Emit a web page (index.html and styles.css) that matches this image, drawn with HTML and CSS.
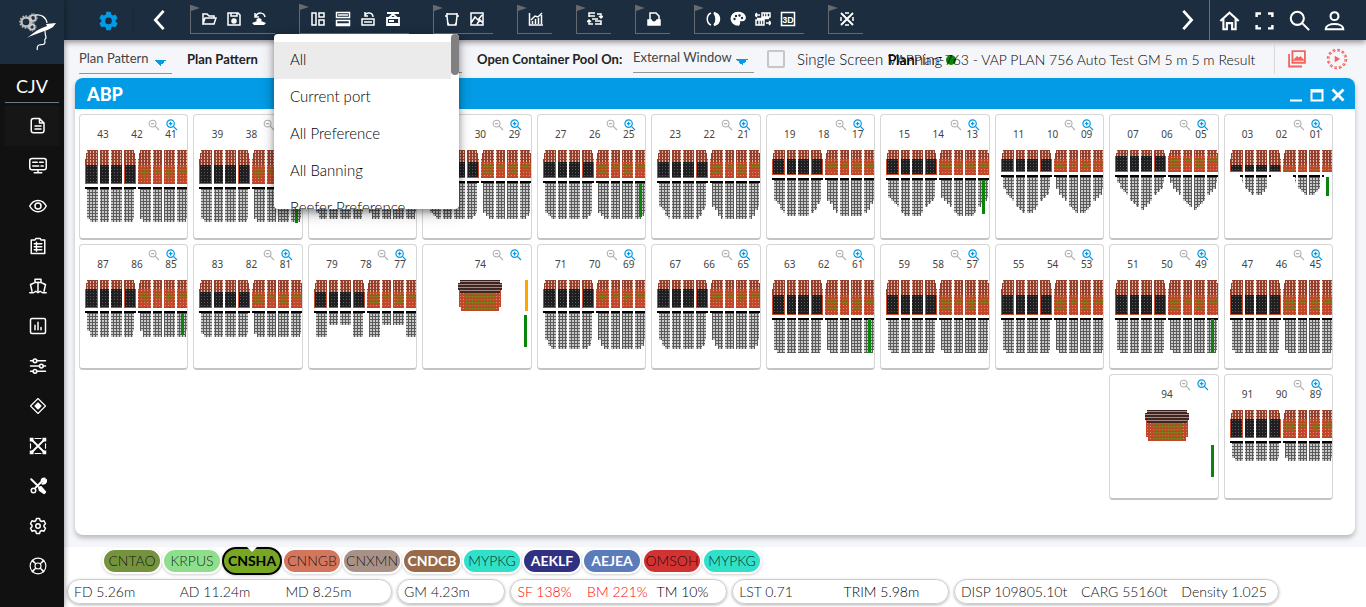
FILE: index.html
```html
<!DOCTYPE html>
<html lang="en">
<head>
<meta charset="utf-8">
<title>ABP – Stowage Planning</title>
<link rel="stylesheet" href="styles.css">
</head>
<body>
<svg class="defs" width="0" height="0" aria-hidden="true">
  <defs>
    <pattern id="p-brown" width="3" height="3" patternUnits="userSpaceOnUse"><rect width="3" height="3" fill="#93402d"/><rect x="1" y="1" width="1" height="2" fill="#e3b3a6"/></pattern>
    <pattern id="p-black" width="3" height="3" patternUnits="userSpaceOnUse"><rect width="3" height="3" fill="#1f1f21"/><rect x="1" y="1" width="1" height="1" fill="#5a5a5a"/></pattern>
    <pattern id="p-orange" width="3" height="3" patternUnits="userSpaceOnUse"><rect width="3" height="3" fill="#c2462a"/><rect x="1" y="1" width="1" height="1" fill="#d98a70"/></pattern>
    <pattern id="p-olive" width="3" height="3" patternUnits="userSpaceOnUse"><rect width="3" height="3" fill="#b34a20"/><rect y="1" width="3" height="1" fill="#857a1c"/><rect x="1" y="1" width="1" height="2" fill="#7d8020"/></pattern>
    <pattern id="p-hold" width="3" height="3" patternUnits="userSpaceOnUse"><rect width="3" height="3" fill="#5a5a5a"/><rect x="1" y="1" width="2" height="2" fill="#c8c8c8"/></pattern>
    <pattern id="p-house" width="3" height="3" patternUnits="userSpaceOnUse"><rect width="3" height="3" fill="#40241f"/><rect y="1" width="3" height="1" fill="#a18c88"/></pattern>
    <symbol id="i-minus" viewBox="0 0 12 12"><circle cx="4.6" cy="4.6" r="3.4"/><path d="M7.2 7.2 11 11M3 4.6h3.2"/></symbol>
    <symbol id="i-plus" viewBox="0 0 12 12"><circle cx="4.6" cy="4.6" r="3.7"/><path d="M7.4 7.4 11 11M2.8 4.6h3.6M4.6 2.8v3.6"/></symbol>
  </defs>
</svg>

<aside class="side">
  <div class="logo">
    <svg viewBox="0 0 64 64" aria-hidden="true">
      <circle cx="26" cy="22" r="4.5" stroke="#bbb" stroke-width="2.4"/><circle cx="26" cy="22" r="6" stroke="#bbb" stroke-width="1.6" stroke-dasharray="1.5 1.5"/>
      <circle cx="33" cy="18" r="2.8" stroke="#ccc" stroke-width="1.8"/><circle cx="33" cy="18" r="4.2" stroke="#ccc" stroke-dasharray="1.3 1.2"/>
      <circle cx="32" cy="27" r="2.6" stroke="#ccc" stroke-width="1.8"/><circle cx="32" cy="27" r="4" stroke="#ccc" stroke-dasharray="1.3 1.2"/>
      <path d="M35 15c6-1 11 2 12 8" stroke="#fff" stroke-width="1.2"/>
      <path d="M27 38c7-6 13-10 20-12l-1-2 10-1-3 4c-8 5-17 6-26 11z" fill="#fff"/>
      <path d="M45 31c0 4 1 5 1 7-1 1-2 1-1 4 0 4-4 2-6 3-3 1-1 3-2 5" stroke="#fff" stroke-width="1.2"/>
    </svg>
  </div>
  <div class="vessel">CJV</div>
  <nav class="side-nav">
    <button class="on" aria-label="Document"><svg viewBox="0 0 24 24"><path d="M6 2h8l6 6v10q0 3-3 3H6q-3 0-3-3V5q0-3 3-3M14 2v6h6M8 12h8M8 16h8"/></svg></button>
    <button aria-label="Monitor"><svg viewBox="0 0 24 24"><rect x="1" y="2" width="22" height="15" rx="3"/><path d="M5 7h6M14 7h5M5 12h8M16 12h3M12 17v4M7 21h10"/></svg></button>
    <button aria-label="View"><svg viewBox="0 0 24 24"><path d="M1 12c5-10 17-10 22 0-5 10-17 10-22 0z"/><circle cx="12" cy="12" r="4"/></svg></button>
    <button aria-label="Checklist"><svg viewBox="0 0 24 24"><path d="M3 4h5l1-2h6l1 2h5v18H3zM7 9h10M7 13h10M7 17h10M10 7v12"/></svg></button>
    <button aria-label="Vessel"><svg viewBox="0 0 24 24"><path d="M8 7V3h8v4M4 9q8-4 16 0M2 10l2 9M22 10l-2 9M2 10l3-1M22 10l-3-1M12 7v13M1 21h5l3-2 3 2 3-2 3 2h5"/></svg></button>
    <button aria-label="Report"><svg viewBox="0 0 24 24"><rect x="2" y="2" width="20" height="20" rx="2"/><path d="M8 17v-6M12 17V7M16 17v-3"/></svg></button>
    <button aria-label="Settings"><svg viewBox="0 0 24 24"><path d="M2 5h4M10 5h12M2 12h12M19 12h3M2 19h4M10 19h12"/><circle cx="8" cy="5" r="2.5"/><circle cx="16.500" cy="12" r="2.5"/><circle cx="8" cy="19" r="2.5"/></svg></button>
    <button aria-label="Hazard"><svg class="thin" viewBox="0 0 24 24"><path d="M12 2l10 10-10 10L2 12z"/><path d="M12 8l4 4-4 4-4-4z" fill="#fff"/></svg></button>
    <button aria-label="Lashing"><svg class="thin" viewBox="0 0 24 24"><path d="M3 3l18 18M21 3L3 21" stroke-width="2.400"/><path d="M8 2h8M8 22h8M2 9v6M22 9v6"/><path d="M1 1h5v5H1zM18 1h5v5h-5zM1 18h5v5H1zM18 18h5v5h-5z" fill="#fff" stroke="none"/></svg></button>
    <button aria-label="Tools"><svg viewBox="0 0 24 24"><path d="M3 3l9 9M9 14l8-8M17 6q-1-4 4-4l-3 3 2 2 3-3q0 5-5 5" stroke-width="2.600"/><circle cx="6" cy="18" r="3"/><path d="M13 14l3-1 6 7-2 2-6-4z" fill="#fff"/></svg></button>
    <button aria-label="Preferences"><svg viewBox="0 0 24 24"><path d="M10 2h4l1 3 2 1 3-1 2 4-2 2v2l2 2-2 4-3-1-2 1-1 3h-4l-1-3-2-1-3 1-2-4 2-2v-2L2 9l2-4 3 1 2-1z"/><circle cx="12" cy="12" r="3"/></svg></button>
    <button aria-label="Support"><svg class="thin" viewBox="0 0 24 24"><circle cx="12" cy="12" r="10.500"/><circle cx="12" cy="12" r="4"/><path d="M4 5l5 4M20 5l-5 4M4 19l5-4M20 19l-5-4M5 4l4 5M19 4l-4 5M5 20l4-5M19 20l-4-5"/></svg></button>
  </nav>
</aside>

<div class="app">
  <header class="bar">
    <button class="gear" aria-label="Options"><svg viewBox="0 0 24 24"><path fill-rule="evenodd" d="M9.5 2h5l.6 3 2 1.200 2.900-1 2.500 4.300-2.300 2v2l2.300 2-2.500 4.300-2.900-1-2 1.200-.6 3h-5l-.6-3-2-1.200-2.900 1L1.500 15.500l2.300-2v-2l-2.300-2L4 5.200l2.900 1 2-1.200zM12 8.700a3.800 3.800 0 1 0 0 7.600 3.800 3.800 0 0 0 0-7.600z"/></svg></button>
    <button class="prev" aria-label="Previous"><svg viewBox="0 0 24 24"><path d="M17 2L8 12l9 10"/></svg></button>
    <div class="groups">
      <div class="group">
        <button aria-label="Open"><svg viewBox="0 0 16 16"><path d="M2 13V3h4l2 2h5v2M2 13l2-6h11l-2 6z"/></svg></button>
        <button aria-label="Save"><svg viewBox="0 0 16 16"><path d="M2 2h10l2 2v10H2zM5 2v3h6V2"/><circle cx="8" cy="10" r="2" fill="#fff"/></svg></button>
        <button aria-label="Restore"><svg viewBox="0 0 16 16"><path d="M5 5c2-4 8-4 9 1M4 2v4h4"/><path d="M5 9q3-4 6 0l-1 1 5 2-2 2H3l-2-2 5-2z" fill="#fff" stroke="none"/></svg></button>
      </div>
      <div class="group tall">
        <button aria-label="Layout"><svg viewBox="0 0 16 16"><path d="M2 2h4v12H2zM9 2h5v4H9zM9 9h5v5H9z"/></svg></button>
        <button aria-label="Stacks"><svg viewBox="0 0 16 16"><path d="M1.500 1.500h13v5h-13zM1.500 9.500h13v5h-13zM4 3v2M6 3v2M8 3v2M10 3v2M12 3v2M2 13h12"/></svg></button>
        <button aria-label="Return"><svg viewBox="0 0 16 16"><path d="M5 4c1-3 8-3 8 2M5 1v4h3M2 8h12v6H2zM5 10v2M7 10v2M9 10v2M11 10v2"/></svg></button>
        <button aria-label="Lift"><svg viewBox="0 0 16 16"><path d="M2 2h12M8 2v2M4 7l4-4 4 4M2 7h12v7H2zM4 10h5M3 13h10" stroke-width="1.800"/></svg></button>
      </div>
      <div class="group">
        <button aria-label="Hold"><svg viewBox="0 0 16 16"><path d="M1 5h2V2M15 5h-2V2M3 3h10M3 5l1 9h8l1-9M4 12l1 2M12 12l-1 2"/></svg></button>
        <button aria-label="Chart image"><svg viewBox="0 0 16 16"><path d="M2 2h12v12H2zM2 12l4-6 3 3 4-5M8 13l3-4 3 3"/></svg></button>
      </div>
      <div class="group"><button aria-label="Trend"><svg viewBox="0 0 16 16"><path d="M1.500 2v12H15M4.500 13v-3M7.500 13V8M10.500 13V7M13.500 13V4M3 9l4-4 3 1 4-4"/></svg></button></div>
      <div class="group"><button aria-label="Exchange"><svg viewBox="0 0 16 16"><path d="M2 6V2h6M2 5h6M10 3h4v4M12 5l2 2 2-2M14 14v-4H8M8 13h6M6 13H2v-4M0 11l2-2 2 2M5 8h6"/></svg></button></div>
      <div class="group"><button aria-label="Print"><svg viewBox="0 0 16 16"><path d="M4 9V2h6l3 3v4"/><path d="M2 9h3c1 3 5 3 6 0h3v5H2z" fill="#fff"/></svg></button></div>
      <div class="group">
        <button aria-label="Contrast"><svg viewBox="0 0 16 16"><path d="M6 2c-5 2-5 10 0 12M9 2c3 4 3 8 0 12"/><path d="M10 2c6 2 6 10 0 12 2-5 2-8 0-12z" fill="#fff"/></svg></button>
        <button aria-label="Palette"><svg viewBox="0 0 16 16"><path d="M8 1.500c8 0 9 8 4 8H9.500c-1 1 1 3-1 4.500C-1 14-1 1.500 8 1.500z" fill="#fff"/><g fill="#1b2d3e" stroke="none"><circle cx="4.500" cy="8" r="1.200"/><circle cx="6" cy="5" r="1.200"/><circle cx="9.500" cy="4.500" r="1.200"/><circle cx="12" cy="7" r="1.200"/></g></svg></button>
        <button aria-label="Swap"><svg viewBox="0 0 16 16"><path d="M0 4h5M2 2L0 4l2 2M7 2h8v4H7zM9.500 2v4M12 2v4M1 9h8v5H1zM4 9v5M6.500 9v5M11 12h5M14 10l2 2-2 2M2 7.500h12"/></svg></button>
        <button aria-label="3D"><svg viewBox="0 0 16 16"><rect x="1.500" y="1.500" width="13" height="13"/><text x="8" y="11.500" text-anchor="middle">3D</text></svg></button>
      </div>
      <div class="group"><button aria-label="Lashing"><svg viewBox="0 0 16 16"><path d="M2 2l12 12M14 2L2 14" stroke-width="2"/><path d="M6 2h4M6 14h4M2 6v4M14 6v4"/></svg></button></div>
    </div>
    <button class="next" aria-label="Next"><svg viewBox="0 0 24 24"><path d="M8 2l9 10-9 10"/></svg></button>
    <div class="user">
      <button aria-label="Home"><svg viewBox="0 0 24 24"><path d="M1.500 12.500L12 3l10.500 9.500M5 10v12h4v-7h6v7h4V10"/></svg></button>
      <button aria-label="Full screen"><svg viewBox="0 0 24 24"><path d="M3 8V4h5M16 4h5v4M21 17v4h-5M8 21H3v-4" stroke-width="2.800"/></svg></button>
      <button aria-label="Search"><svg viewBox="0 0 24 24"><circle cx="9.500" cy="9.500" r="7.500"/><path d="M15 15l8 8"/></svg></button>
      <button aria-label="Account"><svg viewBox="0 0 24 24"><circle cx="12" cy="7" r="4.500"/><path d="M2 22c0-8 20-8 20 0z"/></svg></button>
    </div>
  </header>

  <section class="filters">
    <select class="drop pattern" aria-label="Pattern"><option>Plan Pattern</option></select>
    <label class="cap short" for="plan">Plan Pattern</label>
    <div class="combo">
      <select id="plan" class="drop"><option>All</option><option>Current port</option></select>
      <div class="menu">
        <ul>
          <li class="sel">All</li><li>Current port</li><li>All Preference</li><li>All Banning</li><li>Reefer Preference</li>
        </ul>
        <span class="thumb"></span>
      </div>
    </div>
    <label class="cap long" for="pool">Open Container Pool On:</label>
    <select id="pool" class="drop pool"><option>External Window</option></select>
    <label class="single"><input type="checkbox"><span>Single Screen Planning</span></label>
    <div class="plan-name"><b>Plan</b><i></i><span>VAPPlan-763 - VAP PLAN 756 Auto Test GM 5 m 5 m Result</span></div>
    <div class="alerts">
      <button aria-label="Gallery"><svg viewBox="0 0 24 24"><path d="M6.500 2.500h15v14h-15zM2.500 6v15H18M9 13l3-3 2 2 2-2 3 3z"/></svg></button>
      <button aria-label="Run"><svg class="run" viewBox="0 0 24 24"><circle cx="12" cy="12" r="10.200" stroke-dasharray="3 2.340"/><circle cx="12" cy="12" r="8.600" stroke-dasharray="2.700 1.800" stroke-width="1"/><path d="M9.500 8.500l6 3.500-6 3.500z" fill="#f4655f" stroke="none"/></svg></button>
    </div>
  </section>

  <main class="window">
    <header class="window-head">
      <h1>ABP</h1>
      <button aria-label="Minimise"><svg viewBox="0 0 14 14"><path d="M1 12.500h12"/></svg></button>
      <button aria-label="Maximise"><svg viewBox="0 0 14 14"><path d="M1.500 2h11v10.500h-11zM1.500 3.500h11"/></svg></button>
      <button aria-label="Close"><svg viewBox="0 0 14 14"><path d="M1.500 1.500l11 11M12.500 1.500l-11 11" stroke-width="2.800"/></svg></button>
    </header>
    <div class="bays" id="bays"></div>
  </main>

  <footer class="foot">
    <div class="ports">
      <button class="tao">CNTAO</button><button class="krp">KRPUS</button><button class="sha">CNSHA</button><button class="ngb">CNNGB</button><button class="xmn">CNXMN</button><button class="dcb">CNDCB</button><button class="pkg">MYPKG</button><button class="klf">AEKLF</button><button class="jea">AEJEA</button><button class="soh">OMSOH</button><button class="pkg">MYPKG</button>
    </div>
    <div class="stats">
      <div class="stat"><span>FD 5.26m</span><span>AD 11.24m</span><span>MD 8.25m</span></div>
      <div class="stat"><span>GM 4.23m</span></div>
      <div class="stat"><span class="bad">SF 138%</span><span class="bad">BM 221%</span><span class="dark">TM 10%</span></div>
      <div class="stat"><span>LST 0.71</span><span class="dark">TRIM 5.98m</span></div>
      <div class="stat spread"><span>DISP 109805.10t</span><span>CARG 55160t</span><span>Density 1.025</span></div>
    </div>
  </footer>
</div>
<script src="bays.js"></script>
</body>
</html>
```
FILE: styles.css
```css
* { box-sizing: border-box; }
body { margin: 0; display: flex; min-height: 100vh; font-family: Lato, "Open Sans", sans-serif; font-weight: 300; font-size: 14px; color: #000; background: #f5f6fa; }
button { border: 0; padding: 0; background: none; font: inherit; color: inherit; display: inline-flex; align-items: center; justify-content: center; }
svg { fill: none; stroke: none; display: block; flex: none; }
.defs { position: absolute; }

.side { width: 64px; flex: none; background: #111; color: #fff; box-shadow: 1px 0 5px rgba(0,0,0,.35); z-index: 1; }
.logo { height: 64px; background: #1b2d3e; }
.logo svg { width: 64px; height: 64px; }
.vessel { height: 39px; margin: 0 5px; border-bottom: 1px solid #6c7a86; text-align: center; font-size: 18px; font-weight: 400; line-height: 44px; }
.side-nav { display: flex; flex-direction: column; padding: 3px 5px; }
.side-nav button { height: 40px; padding-left: 12px; }
.side-nav .on { background: #161616; }
.side-nav svg { width: 18px; height: 18px; stroke: #fff; stroke-width: 2; stroke-linejoin: round; stroke-linecap: round; }
.side-nav .thin { stroke-width: 1.5; }

.app { flex: 1; min-width: 0; display: flex; flex-direction: column; }
.bar { height: 40px; background: #1b2d3e; display: flex; align-items: center; box-shadow: 0 2px 6px rgba(0,0,0,.45); color: #fff; }
.bar svg { stroke: #fff; }
.gear { width: 70px; padding-left: 20px; height: 32px; border-right: 1px solid #182838; }
.bar .gear svg { width: 21px; height: 21px; stroke: none; fill: #039be5; }
.prev { width: 50px; }
.next { width: 44px; margin-left: auto; }
.prev svg, .next svg { width: 22px; height: 22px; stroke-width: 3; }
.groups { display: flex; gap: 24px; align-items: flex-end; height: 40px; padding: 0 0 6px 6px; }
.group { display: flex; height: 29px; padding: 0 4px 0 5px; border-left: 1px solid #66696d; border-bottom: 1px solid #66696d; position: relative; }
.group.tall { height: 30px; }
.group::before { content: ""; position: absolute; left: 0; top: 0; border-left: 9px solid #66696d; border-top: 3px solid transparent; border-bottom: 3px solid transparent; }
.group button { width: 25px; }
.group svg { width: 16px; height: 16px; stroke-width: 1.5; }
.group text { font: 700 9px "Liberation Sans", sans-serif; fill: #fff; stroke: none; }
.user { display: flex; height: 40px; border-left: 1px solid #66717c; padding: 0 14px 0 2px; }
.user button { width: 35px; }
.user svg { width: 21px; height: 21px; stroke-width: 2.4; }

.filters { height: 38px; display: flex; align-items: center; padding: 0 18px 0 15px; }
.drop { appearance: none; border: 0; border-bottom: 1px solid #949494; border-radius: 0; height: 28px; padding: 0 0 3px; font: 400 13px Lato, sans-serif; color: #444; outline: 0; background: linear-gradient(to bottom right, #039be5 50%, transparent 50%) no-repeat right 6px top 14px / 6px 6px, linear-gradient(to bottom left, #039be5 50%, transparent 50%) no-repeat right 12px top 14px / 6px 6px; }
.pattern { width: 93px; margin: 2px 15px 0 0; }
.pool { width: 121px; }
.cap { font-size: 13px; font-weight: 700; color: #222; margin-right: 15px; white-space: nowrap; }
.cap.short { width: 72px; }
.cap.long { width: 141px; }
.combo { position: relative; width: 188px; margin-right: 15px; flex: none; }
.combo .drop { width: 100%; display: block; }
.menu { position: absolute; left: 0; top: -11px; width: 185px; height: 175px; overflow: hidden; background: #fff; border-radius: 4px; z-index: 5; box-shadow: 0 3px 6px rgba(0,0,0,.3), 0 5px 14px rgba(0,0,0,.25); }
.menu ul { list-style: none; margin: 0; padding: 8px 8px 0 0; }
.menu li { height: 37px; line-height: 35px; padding-left: 16px; font-size: 15px; }
.menu .sel { background: #ebebeb; }
.thumb { position: absolute; top: 0; right: 0; width: 8px; height: 41px; border-radius: 4px; background: #808080; }
.single { display: flex; align-items: center; gap: 12px; margin-left: 13px; font-size: 15px; width: 121px; white-space: nowrap; }
.single input { appearance: none; width: 18px; height: 18px; border: 2px solid #c6c6c6; border-radius: 2px; margin: 0; flex: none; }
.plan-name { position: relative; white-space: nowrap; }
.plan-name b { position: absolute; left: 0; top: 0; font-weight: 400; }
.plan-name i { position: absolute; left: 58px; top: 4px; width: 10px; height: 10px; border-radius: 50%; background: #0a840a; z-index: -1; }
.alerts { margin-left: auto; display: flex; gap: 18px; border-left: 1px solid #d8d8d8; padding-left: 11px; height: 30px; }
.alerts svg { width: 20px; height: 20px; margin: 0 1px; stroke: #f4655f; stroke-width: 2.2; }
.alerts .run { width: 22px; height: 22px; margin: 0; stroke-width: 1.8; }

.window { flex: 1; margin: 0 11px 12px; background: #fff; border-radius: 8px; box-shadow: 0 3px 5px rgba(0,0,0,.25); display: flex; flex-direction: column; }
.window-head { height: 31px; background: #039be5; border-radius: 8px 8px 0 0; display: flex; align-items: center; gap: 7px; padding: 2px 10px 0 12px; }
.window-head h1 { margin: 0 auto 0 0; font-size: 18px; font-weight: 900; line-height: 22px; padding-bottom: 2px; color: #fff; }
.window-head svg { width: 14px; height: 14px; stroke: #fff; stroke-width: 2; }
.bays { display: grid; grid-template-columns: repeat(11, 1fr); gap: 4px 5px; padding: 5px 22px 0 4px; }
.bay { height: 126px; border: 1px solid #d6d6d6; border-bottom: 2px solid #c4c4c4; border-radius: 4px; overflow: hidden; padding-top: 5px; background: #fff; }
.bay.first-aft { grid-column: 10; }
.bay-tools { display: flex; justify-content: flex-end; gap: 6px; height: 10px; padding-right: 9px; }
.bay-tools svg { width: 12px; height: 12px; stroke: #b0b0b0; stroke-width: 1.1; }
.bay-tools .in svg { stroke: #039be5; stroke-width: 1.2; }
.bay-names { display: flex; height: 20px; padding: 0 0 11px 6px; font: 10px/9px "Noto Sans", sans-serif; color: #444; }
.bay-names span { width: 34px; text-align: center; flex: none; }
.bay-names span:only-child { width: 102px; }
.bay-plan { width: 108px; height: 78px; shape-rendering: crispEdges; }

.foot { background: #fff; height: 60px; padding: 0 3px 3px; display: flex; flex-direction: column; justify-content: space-between; }
.ports { display: flex; padding-left: 35px; height: 27px; align-items: center; }
.ports button { width: 60px; height: 26px; border: 2px solid #fff; border-radius: 13px; padding-bottom: 1px; box-shadow: 0 1px 3px rgba(0,0,0,.2); color: rgba(0,0,0,.85); position: relative; }
.ports .tao { background: #75933f; } .ports .krp { background: #8fde8c; } .ports .ngb { background: #d4765e; }
.ports .xmn { background: #a89288; } .ports .pkg { background: #30e0c8; } .ports .soh { background: #d23232; }
.ports .dcb { background: #996a4a; } .ports .klf { background: #313183; } .ports .jea { background: #5c7bbb; }
.ports .dcb, .ports .klf, .ports .jea { color: #fff; font-weight: 700; }
.ports .sha { background: #78a823; color: #000; font-weight: 700; border-color: #000; height: 28px; border-radius: 14px; }
.ports .sha::before { content: ""; position: absolute; top: -2px; left: 23px; border: 5px solid transparent; border-top-color: #fff; border-bottom: 0; }
.stats { display: grid; grid-template-columns: 3fr 1fr 2fr 2fr 3fr; gap: 5px; padding-right: 84px; }
.stat { display: flex; align-items: center; height: 25px; border: 1px solid #ccc; border-radius: 13px; padding-left: 6px; box-shadow: 0 1px 3px rgba(0,0,0,.3); color: #111; white-space: nowrap; min-width: 0; }
.stat span { flex: 1; }
.stat.spread { justify-content: space-between; padding-right: 11px; }
.stat.spread span { flex: none; }
.stat .bad { color: #f00; } .stat .dark { color: #000; }
```
FILE: bays.js
```js
// deck: deck height, dark: top of loaded stacks, hold: max hold depth,
// edge: depth at the outer stacks, taper: share of half-width that slopes
const bays = [
  { n: ['43', '42', '41'], deck: 34, dark: 15, hold: 34, edge: 30, taper: .15 },
  { n: ['39', '38', ''], deck: 34, dark: 15, hold: 34, edge: 30, taper: .15, green: [38, 73] },
  { n: ['', '', ''], deck: 28, dark: 12, hold: 37, edge: 30, taper: .2 },
  { n: ['', '30', '29'], deck: 28, dark: 12, hold: 35, edge: 28, taper: .25 },
  { n: ['27', '26', '25'], deck: 28, dark: 12, hold: 35, edge: 28, taper: .25, green: [33, 67] },
  { n: ['23', '22', '21'], deck: 28, dark: 12, hold: 35, edge: 23, taper: .4 },
  { n: ['19', '18', '17'], deck: 25, dark: 9, hold: 35, edge: 20, taper: .5 },
  { n: ['15', '14', '13'], deck: 25, dark: 9, hold: 35, edge: 16, taper: .7, green: [30, 64] },
  { n: ['11', '10', '09'], deck: 22, dark: 9, hold: 35, edge: 12, taper: .8 },
  { n: ['07', '06', '05'], deck: 22, dark: 6, hold: 32, edge: 6, taper: .9 },
  { n: ['03', '02', '01'], deck: 22, dark: 15, hold: 19, edge: 6, taper: .8, inset: 10, green: [27, 46] },
  { n: ['87', '86', '85'], deck: 28, dark: 9, hold: 24, edge: 18, taper: .2, green: [33, 55] },
  { n: ['83', '82', '81'], deck: 28, dark: 12, hold: 24, edge: 21, taper: .2 },
  { n: ['79', '78', '77'], deck: 28, dark: 12, hold: 24, edge: 24, taper: .1, notch: 1 },
  { n: ['74'], amber: [0, 31], green: [35, 67] },
  { n: ['71', '70', '69'], deck: 28, dark: 9, hold: 35, edge: 27, taper: .3 },
  { n: ['67', '66', '65'], deck: 28, dark: 9, hold: 35, edge: 27, taper: .3 },
  { n: ['63', '62', '61'], deck: 35, dark: 15, hold: 34, edge: 30, taper: .15, green: [39, 73] },
  { n: ['59', '58', '57'], deck: 35, dark: 15, hold: 34, edge: 30, taper: .15 },
  { n: ['55', '54', '53'], deck: 35, dark: 15, hold: 34, edge: 30, taper: .15 },
  { n: ['51', '50', '49'], deck: 35, dark: 15, hold: 34, edge: 28, taper: .2, green: [39, 73] },
  { n: ['47', '46', '45'], deck: 35, dark: 15, hold: 34, edge: 30, taper: .15 },
  { n: ['94'], green: [35, 67], first: true },
  { n: ['91', '90', '89'], deck: 28, dark: 9, hold: 18, edge: 15, taper: .2 }
];

const rect = (x, y, w, h, fill) => `<rect x="${x}" y="${y}" width="${w}" height="${h}" fill="${fill}"/>`;
const blocks = [[0, 13], [15, 9], [26, 11], [39, 12]];

function sideView(b, x0, loaded) {
  let s = '';
  blocks.forEach(([bx, bw], i) => {
    const x = x0 + bx;
    const step = i === 0 ? 2 : 0;
    const cut = i === 3 ? 2 : 0;
    s += rect(x + step, 0, bw - step - cut, 3, 'url(#p-brown)');
    s += rect(x + step / 2, 3, bw - step / 2 - cut / 2, 6, 'url(#p-brown)');
    s += rect(x, 9, bw, b.deck - 9, 'url(#p-brown)');
    if (loaded) {
      const side = i === 0 || i === 3 ? 1 : 0;
      s += rect(x, b.dark, bw, b.deck - b.dark, '#c9492b');
      s += rect(x + side, b.dark, bw - side * 2, b.deck - b.dark - 1, 'url(#p-black)');
    } else {
      s += rect(x, b.dark, bw, b.deck - b.dark, 'url(#p-orange)');
      s += rect(x + 2, b.dark + 2, bw - 3, (b.deck - b.dark) * (i % 2 ? .4 : .6) | 0, 'url(#p-olive)');
    }
    const inset = b.inset || 0;
    const from = Math.max(bx, inset), to = Math.min(bx + bw, 51 - inset);
    if (to <= from) return;
    s += rect(x0 + from, b.deck + 3, to - from, 2, '#000');
    for (let c = Math.max(from, inset + 2); c < Math.min(to, 49 - inset); c += 3) {
      const half = 23.5 - inset;
      const d = Math.min(c - 1 - inset, 49 - inset - c) / half;
      let h = b.hold - (b.hold - b.edge) * Math.max(0, 1 - d / b.taper);
      if (b.notch && c > 12 && c < 38) h = b.hold - 12;
      h = Math.round(h / 3) * 3;
      s += rect(x0 + c, b.deck + 5, Math.min(3, to - c, 49 - inset - c), h, 'url(#p-hold)');
    }
  });
  return s;
}

function house() {
  return rect(37, 0, 40, 4, 'url(#p-house)') + rect(35, 3, 44, 7, 'url(#p-house)') +
    rect(36, 10, 42, 17, 'url(#p-orange)') + rect(38, 27, 38, 4, 'url(#p-orange)') +
    rect(37, 10, 40, 3, 'url(#p-house)') + rect(43, 13, 30, 17, 'url(#p-olive)');
}

document.getElementById('bays').innerHTML = bays.map(b => {
  let art = b.n.length === 1 ? house() : sideView(b, 5, true) + sideView(b, 58, false);
  if (b.green) art += rect(101, b.green[0], 3, b.green[1] - b.green[0], '#0a840a');
  if (b.amber) art += rect(102, b.amber[0], 3, b.amber[1] - b.amber[0], '#ffa500');
  return `<article class="bay${b.first ? ' first-aft' : ''}">
    <div class="bay-tools"><button aria-label="Zoom out"><svg><use href="#i-minus"/></svg></button><button class="in" aria-label="Zoom in"><svg><use href="#i-plus"/></svg></button></div>
    <div class="bay-names">${b.n.map(t => `<span>${t}</span>`).join('')}</div>
    <svg class="bay-plan">${art}</svg>
  </article>`;
}).join('');
```
